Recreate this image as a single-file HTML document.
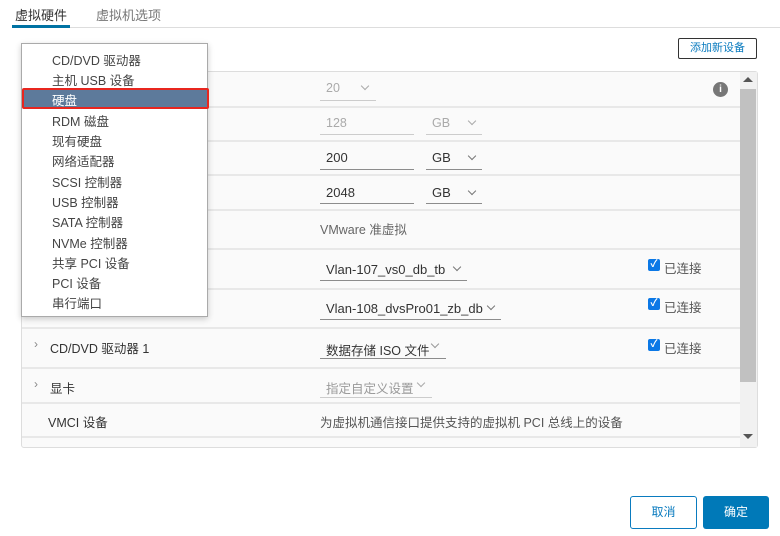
<!DOCTYPE html>
<html><head><meta charset="utf-8"><style>
*{margin:0;padding:0;box-sizing:border-box}
body{width:780px;height:536px;background:#fff;position:relative;overflow:hidden;font-family:"Liberation Sans","Noto Sans CJK SC",sans-serif;font-size:12px;color:#333}
.a{position:absolute;white-space:nowrap}
.sep{position:absolute;left:22px;width:718px;height:2px;background:#e8e8e8}
.ul{position:absolute;height:1px;background:#8c8c8c}
.chev{position:absolute;width:6px;height:6px;border-right:1px solid #777;border-bottom:1px solid #777;transform:rotate(45deg)}
.cb{position:absolute;width:12px;height:12px;background:#0b78e6;border-radius:2px;color:#fff;font-size:10px;line-height:12px;text-align:center;font-weight:bold}
.mi{position:absolute;left:52px;font-size:12.5px;color:#444}
</style></head><body>
<div class="a" style="left:15px;top:5px;font-size:13px;color:#333">虚拟硬件</div>
<div class="a" style="left:96px;top:5px;font-size:13px;color:#777">虚拟机选项</div>
<div class="a" style="left:12px;top:27px;width:768px;height:1px;background:#ddd"></div>
<div class="a" style="left:12px;top:25px;width:58px;height:3px;background:#0072a3"></div>
<div class="a" style="left:678px;top:38px;width:79px;height:21px;border:1px solid #333;border-radius:2px;color:#0a7bbf;font-size:11px;text-align:center;line-height:19px">添加新设备</div>

<div class="a" style="left:21px;top:71px;width:737px;height:377px;border:1px solid #ddd;border-radius:3px;background:#fafafa"></div>
<div class="a" style="left:740px;top:72px;width:17px;height:375px;background:#f1f1f1"></div>
<div class="a" style="left:740px;top:89px;width:16px;height:293px;background:#c1c1c1"></div>
<div class="a" style="left:743px;top:77px;width:0;height:0;border-left:5px solid transparent;border-right:5px solid transparent;border-bottom:5px solid #555"></div>
<div class="a" style="left:743px;top:434px;width:0;height:0;border-left:5px solid transparent;border-right:5px solid transparent;border-top:5px solid #555"></div>

<div class="sep" style="top:106px"></div><div class="sep" style="top:140px"></div><div class="sep" style="top:174px"></div><div class="sep" style="top:209px"></div><div class="sep" style="top:248px"></div><div class="sep" style="top:288px"></div><div class="sep" style="top:327px"></div><div class="sep" style="top:367px"></div><div class="sep" style="top:402px"></div><div class="sep" style="top:436px"></div>

<div class="a" style="left:326px;top:81px;color:#aaa;font-size:12.5px">20</div><div class="chev" style="left:362px;top:83px;border-color:#aaa"></div><div class="ul" style="left:320px;top:100px;width:56px;background:#ccc"></div>
<div class="a" style="left:713px;top:82px;width:15px;height:15px;border-radius:50%;background:#777;color:#fff;font-size:10px;font-weight:bold;text-align:center;line-height:15px">i</div>

<div class="a" style="left:326px;top:116px;color:#aaa;font-size:12.5px">128</div><div class="ul" style="left:320px;top:134px;width:94px;background:#ccc"></div>
<div class="a" style="left:432px;top:116px;color:#aaa;font-size:12.5px">GB</div><div class="chev" style="left:469px;top:118px;border-color:#aaa"></div><div class="ul" style="left:426px;top:134px;width:56px;background:#ccc"></div>

<div class="a" style="left:326px;top:150px;font-size:13px">200</div><div class="ul" style="left:320px;top:169px;width:94px"></div>
<div class="a" style="left:432px;top:150px;font-size:13px">GB</div><div class="chev" style="left:469px;top:153px"></div><div class="ul" style="left:426px;top:169px;width:56px"></div>

<div class="a" style="left:326px;top:185px;font-size:13px">2048</div><div class="ul" style="left:320px;top:203px;width:94px"></div>
<div class="a" style="left:432px;top:185px;font-size:13px">GB</div><div class="chev" style="left:469px;top:188px"></div><div class="ul" style="left:426px;top:203px;width:56px"></div>

<div class="a" style="left:320px;top:219px;color:#666;font-size:12.5px">VMware 准虚拟</div>

<div class="a" style="left:326px;top:262px;font-size:13px">Vlan-107_vs0_db_tb</div><div class="chev" style="left:454px;top:264px"></div><div class="ul" style="left:320px;top:280px;width:147px"></div>
<div class="cb" style="left:648px;top:259px">✓</div><div class="a" style="left:664px;top:258px;color:#555;font-size:12.5px">已连接</div>

<div class="a" style="left:326px;top:301px;font-size:13px">Vlan-108_dvsPro01_zb_db</div><div class="chev" style="left:488px;top:303px"></div><div class="ul" style="left:320px;top:319px;width:181px"></div>
<div class="cb" style="left:648px;top:298px">✓</div><div class="a" style="left:664px;top:297px;color:#555;font-size:12.5px">已连接</div>

<div class="a" style="left:34px;top:337px;color:#888">›</div><div class="a" style="left:50px;top:338px;font-size:12.5px">CD/DVD 驱动器 1</div>
<div class="a" style="left:326px;top:340px;font-size:12.5px">数据存储 ISO 文件</div><div class="chev" style="left:432px;top:341px;border-color:#999"></div><div class="ul" style="left:320px;top:358px;width:126px"></div>
<div class="cb" style="left:648px;top:339px">✓</div><div class="a" style="left:664px;top:338px;color:#555;font-size:12.5px">已连接</div>

<div class="a" style="left:34px;top:377px;color:#888">›</div><div class="a" style="left:50px;top:378px;font-size:12.5px">显卡</div>
<div class="a" style="left:326px;top:378px;color:#999;font-size:12.5px">指定自定义设置</div><div class="chev" style="left:418px;top:380px;border-color:#aaa"></div><div class="ul" style="left:320px;top:397px;width:112px;background:#ccc"></div>

<div class="a" style="left:48px;top:412px;font-size:12.5px">VMCI 设备</div>
<div class="a" style="left:320px;top:412px;color:#555;font-size:12.5px">为虚拟机通信接口提供支持的虚拟机 PCI 总线上的设备</div>

<div class="a" style="left:21px;top:43px;width:187px;height:274px;background:#fff;border:1px solid #aaa;box-shadow:0 2px 6px rgba(0,0,0,.2)"></div>
<div class="a" style="left:22px;top:88px;width:187px;height:21px;background:#5d7a9b;border:2px solid #e8261f;border-radius:2px"></div>
<div class="mi" style="top:50px">CD/DVD 驱动器</div>
<div class="mi" style="top:70px">主机 USB 设备</div>
<div class="mi" style="top:90px;color:#fff">硬盘</div>
<div class="mi" style="top:111px">RDM 磁盘</div>
<div class="mi" style="top:131px">现有硬盘</div>
<div class="mi" style="top:151px">网络适配器</div>
<div class="mi" style="top:172px">SCSI 控制器</div>
<div class="mi" style="top:192px">USB 控制器</div>
<div class="mi" style="top:212px">SATA 控制器</div>
<div class="mi" style="top:233px">NVMe 控制器</div>
<div class="mi" style="top:253px">共享 PCI 设备</div>
<div class="mi" style="top:273px">PCI 设备</div>
<div class="mi" style="top:293px">串行端口</div>

<div class="a" style="left:630px;top:496px;width:67px;height:33px;border:1px solid #0a7bbf;border-radius:3px;color:#0a7bbf;text-align:center;line-height:31px">取消</div>
<div class="a" style="left:703px;top:496px;width:66px;height:33px;background:#0079b8;border-radius:3px;color:#fff;text-align:center;line-height:33px">确定</div>
</body></html>
